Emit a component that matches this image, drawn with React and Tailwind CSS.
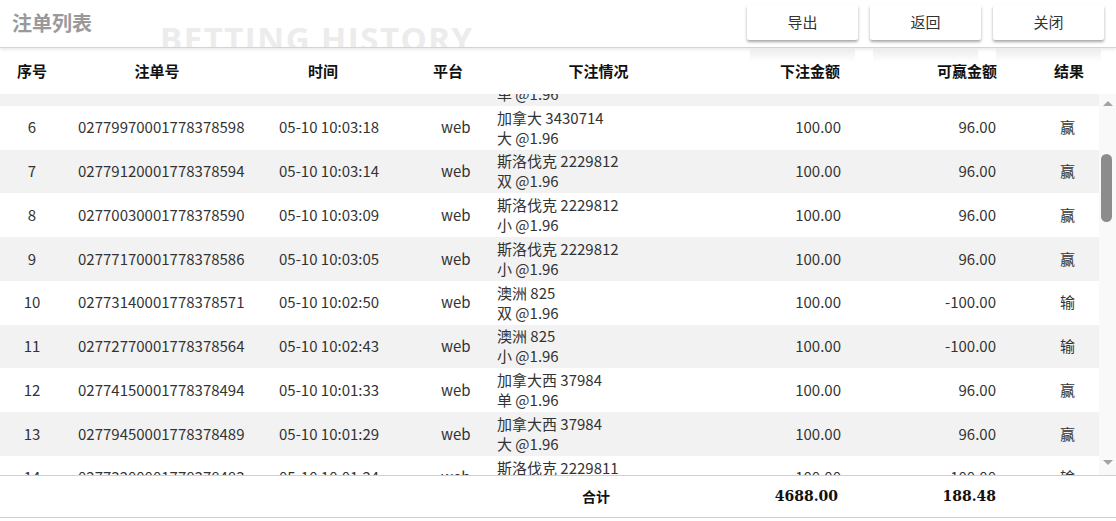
import React, { useLayoutEffect, useRef } from 'react';

const rows = [
    { no: 1, id: '02771550001778378631', time: '05-10 10:03:52', game: '澳洲 826', pick: '大 @1.96', amount: '100.00', win: '-100.00', result: '输' },
    { no: 2, id: '02776280001778378627', time: '05-10 10:03:47', game: '加拿大西 37985', pick: '小 @1.96', amount: '100.00', win: '96.00', result: '赢' },
    { no: 3, id: '02775090001778378619', time: '05-10 10:03:35', game: '斯洛伐克 2229813', pick: '单 @1.96', amount: '100.00', win: '96.00', result: '赢' },
    { no: 4, id: '02778830001778378612', time: '05-10 10:03:29', game: '加拿大 3430715', pick: '双 @1.96', amount: '100.00', win: '-100.00', result: '输' },
    { no: 5, id: '02772460001778378605', time: '05-10 10:03:22', game: '加拿大 3430714', pick: '单 @1.96', amount: '100.00', win: '96.00', result: '赢' },
    { no: 6, id: '02779970001778378598', time: '05-10 10:03:18', game: '加拿大 3430714', pick: '大 @1.96', amount: '100.00', win: '96.00', result: '赢' },
    { no: 7, id: '02779120001778378594', time: '05-10 10:03:14', game: '斯洛伐克 2229812', pick: '双 @1.96', amount: '100.00', win: '96.00', result: '赢' },
    { no: 8, id: '02770030001778378590', time: '05-10 10:03:09', game: '斯洛伐克 2229812', pick: '小 @1.96', amount: '100.00', win: '96.00', result: '赢' },
    { no: 9, id: '02777170001778378586', time: '05-10 10:03:05', game: '斯洛伐克 2229812', pick: '小 @1.96', amount: '100.00', win: '96.00', result: '赢' },
    { no: 10, id: '02773140001778378571', time: '05-10 10:02:50', game: '澳洲 825', pick: '双 @1.96', amount: '100.00', win: '-100.00', result: '输' },
    { no: 11, id: '02772770001778378564', time: '05-10 10:02:43', game: '澳洲 825', pick: '小 @1.96', amount: '100.00', win: '-100.00', result: '输' },
    { no: 12, id: '02774150001778378494', time: '05-10 10:01:33', game: '加拿大西 37984', pick: '单 @1.96', amount: '100.00', win: '96.00', result: '赢' },
    { no: 13, id: '02779450001778378489', time: '05-10 10:01:29', game: '加拿大西 37984', pick: '大 @1.96', amount: '100.00', win: '96.00', result: '赢' },
    { no: 14, id: '02773200001778378483', time: '05-10 10:01:24', game: '斯洛伐克 2229811', pick: '单 @1.96', amount: '100.00', win: '-100.00', result: '输' },
    { no: 15, id: '02776610001778378476', time: '05-10 10:01:18', game: '斯洛伐克 2229811', pick: '大 @1.96', amount: '100.00', win: '96.00', result: '赢' },
    { no: 16, id: '02770880001778378468', time: '05-10 10:01:11', game: '澳洲 824', pick: '双 @1.96', amount: '100.00', win: '96.00', result: '赢' },
];

const buttons = ['导出', '返回', '关闭'];

const App = () => {
    const bodyRef = useRef(null);

    // list is scrolled down a bit, row 5 only shows its last line
    useLayoutEffect(() => {
        if (bodyRef.current) bodyRef.current.scrollTop = 206.75;
    }, []);

    return (
        <div className="relative w-[1116px] h-[521px] bg-white overflow-hidden text-[#333] font-['Noto_Sans_CJK_SC','Noto_Sans',sans-serif]">
            {/* Title bar */}
            <div className="relative z-10 flex h-[48px] items-start justify-between overflow-hidden border-b border-[#d4d4d4] bg-white shadow-[0_2px_3px_rgba(0,0,0,0.08)]">
                <div className="flex items-start">
                    <h1 className="ml-[12px] mt-[10px] text-[20px] leading-[26px] font-bold text-[#999]">注单列表</h1>
                    <span className="ml-[68px] mt-[22px] text-[33px] leading-none font-bold tracking-[1.5px] text-[#ececec] font-['Open_Sans',sans-serif] whitespace-nowrap">
                        BETTING HISTORY
                    </span>
                </div>
                <div className="mr-[12px] mt-[5px] flex gap-[12px]">
                    {buttons.map((b) => (
                        <button
                            key={b}
                            className="h-[35px] w-[111px] rounded-[2px] bg-white text-[15px] text-[#333] shadow-[0_2px_3px_rgba(0,0,0,0.35)]"
                        >
                            {b}
                        </button>
                    ))}
                </div>
            </div>

            {/* button reflections */}
            <div className="absolute top-[48px] right-[15px] z-10 flex gap-[18px]">
                {buttons.map((b) => (
                    <div key={b} className="h-[14px] w-[105px] bg-gradient-to-b from-[#ececec] to-transparent" />
                ))}
            </div>

            {/* Column headers */}
            <div className="flex h-[46px] items-center text-[15px] font-bold text-[#111]">
                <div className="w-[64px] text-center">序号</div>
                <div className="w-[186px] text-center">注单号</div>
                <div className="w-[146px] text-center">时间</div>
                <div className="w-[104px] text-center">平台</div>
                <div className="w-[197px] text-center">下注情况</div>
                <div className="w-[143px] text-right">下注金额</div>
                <div className="w-[157px] text-right">可赢金额</div>
                <div className="flex-1 pl-[57px]">结果</div>
            </div>

            {/* Body */}
            <div className="flex h-[382px] border-b border-[#cfcfd6]">
                <div ref={bodyRef} className="w-[1099px] overflow-hidden">
                    {rows.map((r) => (
                        <div
                            key={r.no}
                            className={`flex h-[43.75px] items-center text-[15px] ${r.no % 2 ? 'bg-[#f2f2f2]' : 'bg-white'}`}
                        >
                            <div className="w-[64px] text-center">{r.no}</div>
                            <div className="w-[186px] pl-[14px]">{r.id}</div>
                            <div className="w-[146px] pl-[29px] whitespace-nowrap">{r.time}</div>
                            <div className="w-[101px] pl-[45px]">web</div>
                            <div className="w-[200px] leading-5 whitespace-nowrap">
                                <div>{r.game}</div>
                                <div>{r.pick}</div>
                            </div>
                            <div className="w-[144px] text-right">{r.amount}</div>
                            <div className="w-[155px] text-right">{r.win}</div>
                            <div className="flex-1 pl-[64px]">{r.result}</div>
                        </div>
                    ))}
                </div>

                {/* scrollbar */}
                <div className="flex w-[17px] flex-col items-center bg-[#f9f9f9]">
                    <div className="mt-[7px] h-0 w-0 border-x-[5px] border-b-[5px] border-x-transparent border-b-[#a3a3a3]" />
                    <div className="ml-[-2px] mt-[48px] h-[68px] w-[11px] rounded-full bg-[#8c8c8c]" />
                    <div className="flex-1" />
                    <div className="mb-[10px] h-0 w-0 border-x-[5px] border-t-[5px] border-x-transparent border-t-[#a3a3a3]" />
                </div>
            </div>

            {/* Totals */}
            <div className="flex h-[42px] items-center border-b border-[#cfcfd6] font-bold text-[#111]">
                <div className="w-[697px] pr-[87px] text-right text-[14px]">合计</div>
                <div className="w-[141px] text-right text-[14px] font-['DejaVu_Serif',serif]">4688.00</div>
                <div className="w-[158px] text-right text-[14px] font-['DejaVu_Serif',serif]">188.48</div>
                <div className="flex-1" />
            </div>
        </div>
    );
};

export default App;
